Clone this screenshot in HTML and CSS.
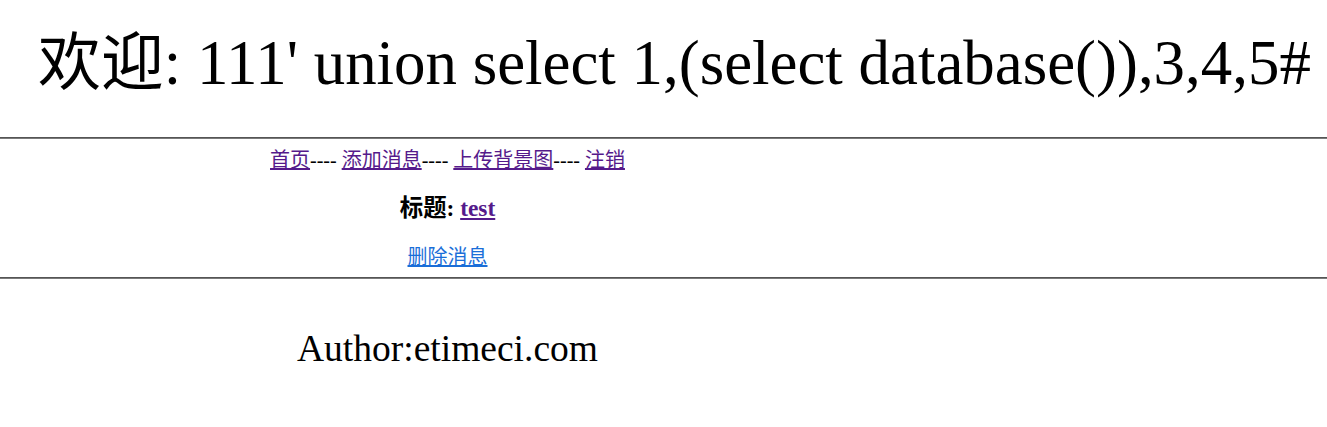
FILE: index.html
```html
<!DOCTYPE html>
<html lang="zh-CN">
<head>
<meta charset="utf-8">
<title>欢迎</title>
<link rel="stylesheet" href="styles.css">
</head>
<body>
<div class="welcome">欢迎: 111' union select 1,(select database()),3,4,5#</div>
<hr class="rule">
<div class="main">
  <div class="nav"><a href="#" class="visited">首页</a>---- <a href="#" class="visited">添加消息</a>---- <a href="#" class="visited">上传背景图</a>---- <a href="#" class="visited">注销</a></div>
  <h3 class="title">标题: <a href="#" class="visited">test</a></h3>
  <div class="del"><a href="#" class="fresh">删除消息</a></div>
</div>
<hr class="rule">
<div class="footer">Author:etimeci.com</div>
</body>
</html>
```
FILE: styles.css
```css
html, body {
  margin: 0;
  padding: 0;
  background: #ffffff;
  color: #000000;
  font-family: "Liberation Serif", "Noto Sans CJK SC", serif;
}

.welcome {
  box-sizing: border-box;
  height: 137px;
  padding: 28px 0 0 38px;
  font-size: 62.9px;
  line-height: 70px;
  white-space: nowrap;
}

.rule {
  margin: 0;
  height: 0;
  border: none;
  border-top: 1px solid #555555;
  border-bottom: 1px solid #7a7a7a;
}

.main {
  box-sizing: border-box;
  width: 895px;
  height: 138px;
  padding-top: 11px;
  text-align: center;
}

.nav {
  font-size: 20px;
  line-height: 20px;
}

.title {
  margin: 24px 0 0;
  font-size: 23.4px;
  line-height: 28px;
  font-weight: bold;
}

.del {
  margin-top: 25px;
  font-size: 20px;
  line-height: 20px;
}

a.visited {
  color: #551a8b;
}

a.fresh {
  color: #1a6ed8;
}

.footer {
  width: 895px;
  margin-top: 48px;
  text-align: center;
  font-size: 37.5px;
  line-height: 44px;
}
```
